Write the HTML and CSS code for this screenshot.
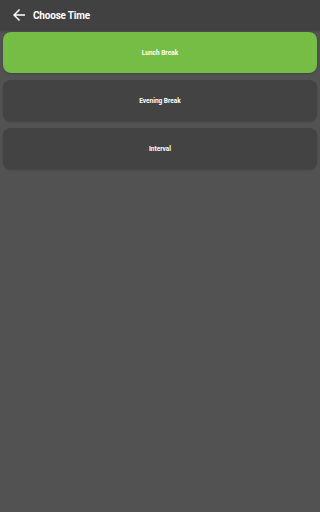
FILE: index.html
```html
<!DOCTYPE html>
<html>
<head>
<meta charset="utf-8">
<link rel="stylesheet" href="styles.css">
</head>
<body>
<header class="appbar">
  <svg class="back" width="18" height="18" viewBox="0 0 24 24"><path d="M20 11H7.83l5.59-5.59L12 4l-8 8 8 8 1.41-1.41L7.83 13H20v-2z" fill="#fff"/></svg>
  <span class="title">Choose Time</span>
</header>
<main class="list">
  <div class="item active">Lunch Break</div>
  <div class="item">Evening Break</div>
  <div class="item">Interval</div>
</main>
</body>
</html>
```

FILE: styles.css
```css
html, body {
  margin: 0;
  padding: 0;
  height: 100%;
}
body {
  background: #525252;
  font-family: Roboto, "Liberation Sans", sans-serif;
  color: #fff;
}
.appbar {
  height: 30px;
  background: #414141;
  display: flex;
  align-items: center;
  padding-left: 10px;
  box-shadow: 0 1px 2px rgba(0,0,0,0.25);
}
.back {
  margin-right: 5px;
}
.title {
  font-size: 10px;
  font-weight: 700;
  letter-spacing: -0.2px;
}
.list {
  display: flex;
  flex-direction: column;
  gap: 7px;
  padding: 2px 3px;
}
.item {
  height: 41px;
  border-radius: 8px;
  background: #434343;
  display: flex;
  align-items: center;
  justify-content: center;
  font-size: 6.5px;
  font-weight: 700;
  box-shadow: 0 1px 2px rgba(0,0,0,0.2);
}
.item.active {
  background: #76bd45;
}
```
